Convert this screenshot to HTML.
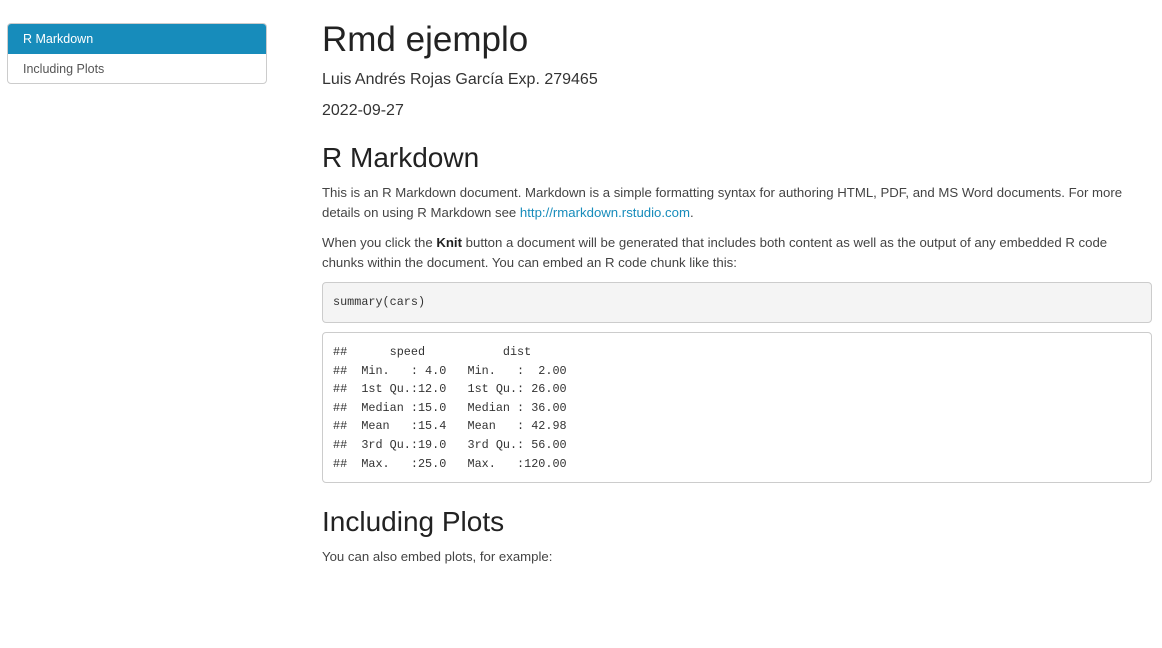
<!DOCTYPE html>
<html><head><meta charset="utf-8"><style>
body{margin:0;width:1162px;height:648px;background:#fff;font-family:"Liberation Sans",sans-serif;color:#333;position:relative;overflow:hidden}
.toc{position:absolute;left:7px;top:23px;width:258px;border:1px solid #ccc;border-radius:4px;overflow:hidden;font-size:12.5px}
.toc div{height:30px;line-height:31px;padding-left:15px}
.toc .a{background:#178cbb;color:#fff}
.toc .b{color:#555;height:29px;line-height:31px}
h1{position:absolute;left:322px;top:20px;margin:0;font-weight:normal;font-size:35px;color:#222}
.au{position:absolute;left:322px;top:71px;font-size:16px}
.dt{position:absolute;left:322px;top:102px;font-size:16px}
h2{position:absolute;left:322px;margin:0;font-weight:normal;font-size:28px;color:#222}
p{position:absolute;left:322px;margin:0;font-size:13.2px;line-height:20px;width:840px;color:#444;white-space:nowrap}
a{color:#178cbb;text-decoration:none}
pre{position:absolute;left:322px;width:808px;margin:0;padding:10px;border:1px solid #ccc;border-radius:4px;font-family:"Liberation Mono",monospace;font-size:11.8px;line-height:18.6px;color:#333}
</style></head><body>
<div class="toc"><div class="a">R Markdown</div><div class="b">Including Plots</div></div>
<h1>Rmd ejemplo</h1>
<div class="au">Luis Andrés Rojas García Exp. 279465</div>
<div class="dt">2022-09-27</div>
<h2 style="top:142px">R Markdown</h2>
<p style="top:183px">This is an R Markdown document. Markdown is a simple formatting syntax for authoring HTML, PDF, and MS Word documents. For more<br>details on using R Markdown see <a>http://rmarkdown.rstudio.com</a>.</p>
<p style="top:233px">When you click the <b style="color:#222">Knit</b> button a document will be generated that includes both content as well as the output of any embedded R code<br>chunks within the document. You can embed an R code chunk like this:</p>
<pre style="top:282px;background:#f4f4f4;height:19px">summary(cars)</pre>
<pre style="top:332px;background:#fff;height:129px">##      speed           dist       
##  Min.   : 4.0   Min.   :  2.00  
##  1st Qu.:12.0   1st Qu.: 26.00  
##  Median :15.0   Median : 36.00  
##  Mean   :15.4   Mean   : 42.98  
##  3rd Qu.:19.0   3rd Qu.: 56.00  
##  Max.   :25.0   Max.   :120.00  </pre>
<h2 style="top:506px">Including Plots</h2>
<p style="top:547px">You can also embed plots, for example:</p>
</body></html>
